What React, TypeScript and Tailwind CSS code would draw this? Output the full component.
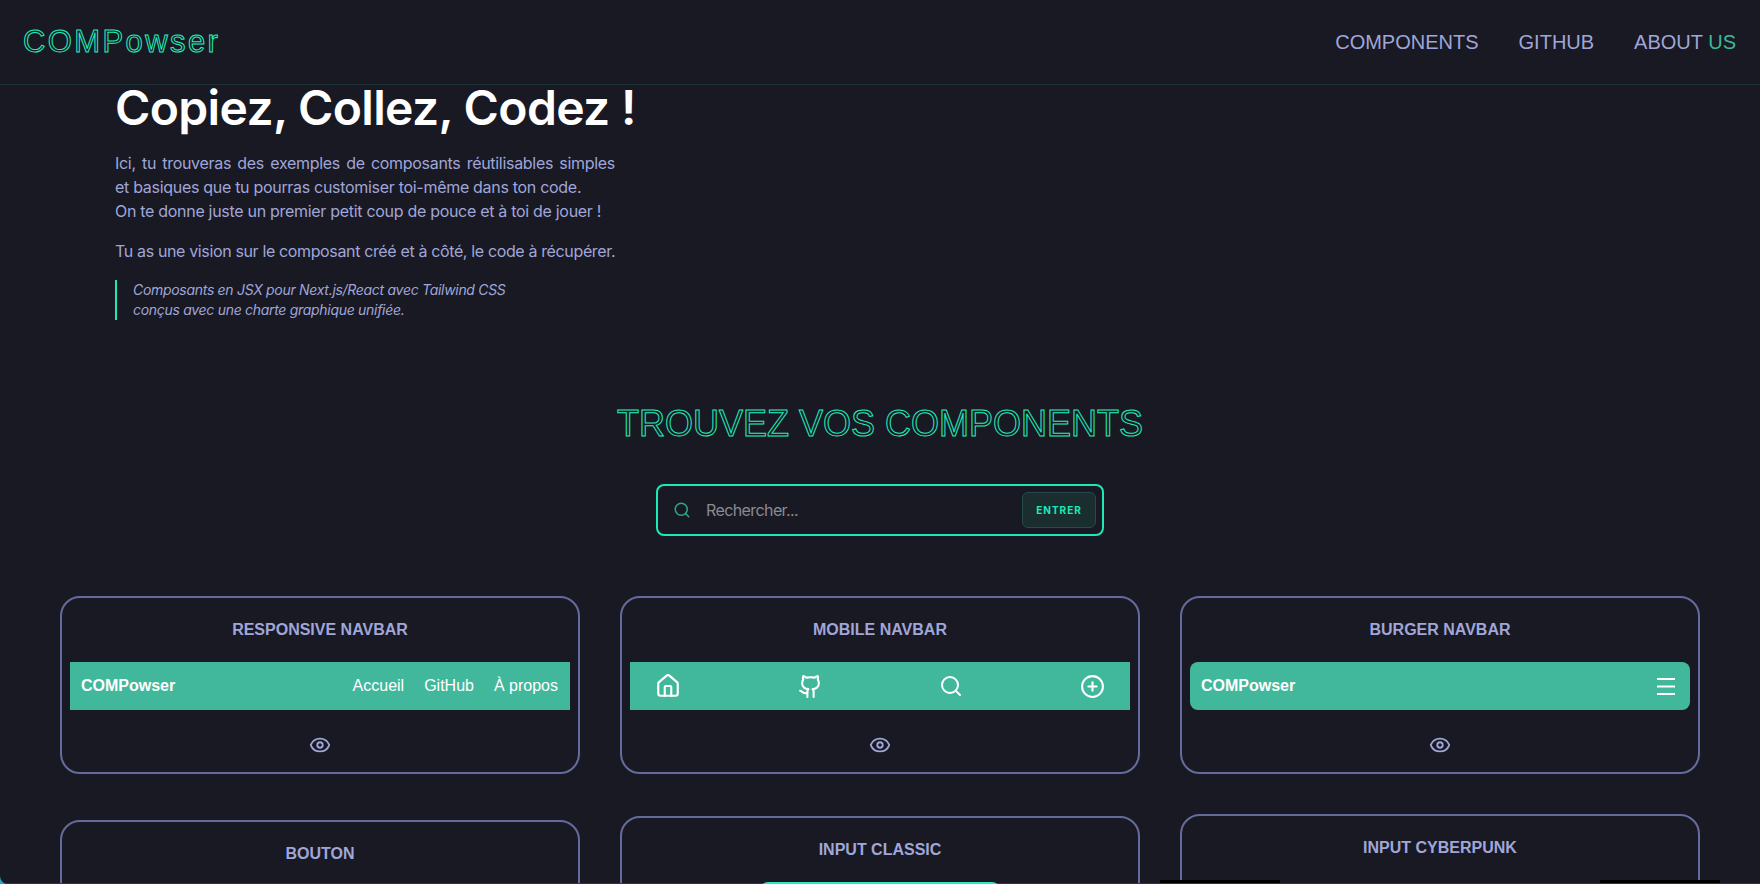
import { Eye, Github, Home, PlusCircle, Search } from 'lucide-react';

const arial = "font-['Liberation_Sans',Arial,sans-serif]";

function Card({ title, children, className = '' }: { title: string; children?: React.ReactNode; className?: string }) {
  return (
    <article className={`rounded-[20px] border-2 border-[#666b9c] px-2 ${className}`}>
      <h3 className={`${arial} pt-[22px] text-center text-base font-bold leading-[20px] text-[#a0a6d8]`}>{title}</h3>
      {children}
    </article>
  );
}

function EyeRow() {
  return (
    <div className="flex h-[62px] items-center justify-center pt-[8px] text-[#a0a6d8]">
      <Eye size={22} strokeWidth={2} />
    </div>
  );
}

export default function App() {
  return (
    <div className="bg-[#2b9fc4]">
      <div className="relative h-[884px] overflow-hidden rounded-bl-lg bg-[#181923] font-['Inter',sans-serif]">
        <header className="flex h-[85px] items-center justify-between border-b border-[#1b3033] pl-[23px] pr-6">
          <a className={`${arial} text-[31px] tracking-[2.4px] text-transparent [-webkit-text-stroke:1px_#22eebc]`}>
            COMPowser
          </a>
          <nav className={`${arial} flex gap-10 text-xl text-[#a0a6d8]`}>
            <a>COMPONENTS</a>
            <a>GITHUB</a>
            <a>
              ABOUT <span className="text-[#3db996]">US</span>
            </a>
          </nav>
        </header>

        <main>
          <section className="pl-[115px]">
            <h1 className="text-[48px] font-semibold leading-[46px] tracking-[-0.65px] text-white">
              Copiez, Collez, Codez !
            </h1>
            <p className="mt-5 w-[500px] text-base leading-6 tracking-[-0.3px] text-[#a0a6d8]">
              <span className="block [text-align-last:justify]">
                Ici, tu trouveras des exemples de composants réutilisables simples
              </span>
              et basiques que tu pourras customiser toi-même dans ton code.
              <br />
              On te donne juste un premier petit coup de pouce et à toi de jouer !
            </p>
            <p className="mt-4 text-base leading-6 tracking-[-0.36px] text-[#a0a6d8]">
              Tu as une vision sur le composant créé et à côté, le code à récupérer.
            </p>
            <blockquote className="mt-[17px] border-l-2 border-[#1de9b6] pl-4 text-sm italic leading-5 tracking-[-0.3px] text-[#a0a6d8]">
              Composants en JSX pour Next.js/React avec Tailwind CSS
              <br />
              conçus avec une charte graphique unifiée.
            </blockquote>
          </section>

          <section className="mt-[84px]">
            <h2 className={`${arial} text-center text-[36px] leading-10 text-transparent [-webkit-text-stroke:1px_#22eebc]`}>
              TROUVEZ VOS COMPONENTS
            </h2>
            <div className="mx-auto mt-10 flex h-[52px] w-[448px] items-center rounded-lg border-2 border-[#1de9b6] pl-[15px] pr-[6px]">
              <Search size={18} className="text-[#2aa78c]" />
              <span className="ml-[15px] flex-1 text-base tracking-[-0.6px] text-[#8a8b92]">Rechercher...</span>
              <button className="h-9 w-[74px] rounded-md border border-[#274a4a] bg-[#1a2e30] text-[10px] font-bold tracking-[1px] text-[#1de9b6]">
                ENTRER
              </button>
            </div>
          </section>

          <section className="mt-[60px] grid grid-cols-3 items-center gap-x-10 gap-y-10 px-[60px]">
            <Card title="RESPONSIVE NAVBAR">
              <div className={`${arial} mt-[22px] flex h-12 items-center justify-between bg-[#41b89c] pl-[11px] pr-[12px] text-white`}>
                <span className="font-bold">COMPowser</span>
                <span className="flex gap-5">
                  <a>Accueil</a>
                  <a>GitHub</a>
                  <a>À propos</a>
                </span>
              </div>
              <EyeRow />
            </Card>
            <Card title="MOBILE NAVBAR">
              <div className="mt-[22px] flex h-12 items-center justify-between bg-[#41b89c] px-[25px] text-white">
                <Home size={26} strokeWidth={2} />
                <Github size={25} strokeWidth={2} />
                <Search size={24} strokeWidth={2} />
                <PlusCircle size={25} strokeWidth={2} />
              </div>
              <EyeRow />
            </Card>
            <Card title="BURGER NAVBAR">
              <div className={`${arial} mt-[22px] flex h-12 items-center justify-between rounded-lg bg-[#41b89c] pl-[11px] pr-[15px] text-white`}>
                <span className="font-bold">COMPowser</span>
                <svg width="18" height="17" viewBox="0 0 18 17" stroke="currentColor" strokeWidth="2">
                  <path d="M0 1h18M0 8.5h18M0 16h18" />
                </svg>
              </div>
              <EyeRow />
            </Card>

            <Card title="BOUTON" className="h-[120px]" />
            <Card title="INPUT CLASSIC" className="h-[128px]">
              <div className="relative z-10 mx-auto mt-[22px] h-10 w-[240px] rounded-lg bg-[#2ee8c4]" />
            </Card>
            <Card title="INPUT CYBERPUNK" className="h-[132px]">
              <div className="-mx-[30px] mt-[22px] flex justify-between">
                <div className="h-6 w-[120px] bg-black" />
                <div className="h-6 w-[120px] bg-black" />
              </div>
            </Card>
          </section>
        </main>
        <div className="absolute inset-x-0 bottom-0 h-px bg-[#33343c]" />
      </div>
    </div>
  );
}
